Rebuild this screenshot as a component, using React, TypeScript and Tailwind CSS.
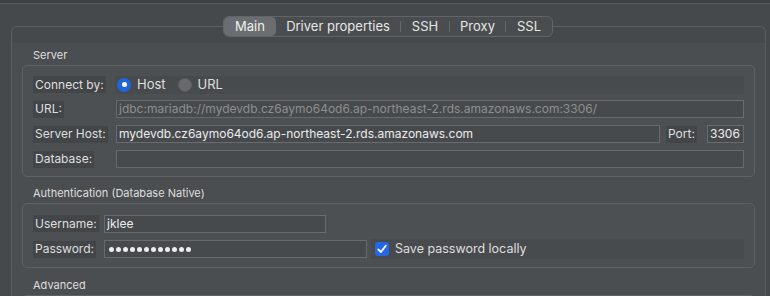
import React from "react"

function Label({ text }: { text: string }) {
  return <span className="inline-flex h-[17px] items-center bg-[#434648] px-[2px] text-[12px] leading-none">{text}</span>
}

function Input({ value, className = "", muted = false }: { value?: string; className?: string; muted?: boolean }) {
  return (
    <div
      className={`flex h-[18px] items-center border border-[#686b6d] bg-[#474a4c] px-[2px] text-[12px] leading-none ${
        muted ? "text-[#8c8f91]" : "text-[#ececec]"
      } ${className}`}
    >
      {value}
    </div>
  )
}

export default function App() {
  const tabs = [
    { name: "Main", w: "w-[52px]", active: true },
    { name: "Driver properties", w: "w-[124px]" },
    { name: "SSH", w: "w-[48px]" },
    { name: "Proxy", w: "w-[55px]" },
    { name: "SSL", w: "w-[46px]" },
  ]

  return (
    <div className="h-[296px] w-[770px] overflow-hidden bg-[#46494b] font-['Inter',sans-serif] text-[13px] text-[#dfdfdf]">
      <div className="h-[4px] border-b border-[#585b5d] bg-[#3e4143]" />

      <div className="pt-[12px]">
        {/* tabs */}
        <div className="relative z-10 ml-[223px] flex h-[21px] w-[330px] items-center rounded-[6px] border border-[#626567] bg-[#4a4d4f]">
          {tabs.map((t, i) => (
            <React.Fragment key={t.name}>
              {i > 1 && <div className="h-[11px] w-px bg-[#66696b]" />}
              <div
                className={`flex h-[19px] items-center justify-center leading-none ${t.w} ${
                  t.active ? "rounded-[5px] bg-[#6b6e70] text-[#f0f0f0]" : "text-[#e6e6e6]"
                }`}
              >
                {t.name}
              </div>
            </React.Fragment>
          ))}
        </div>

        {/* main panel */}
        <div className="-mt-[11px] ml-[11px] w-[755px] rounded-t-[6px] border border-b-0 border-[#5a5d5f] pt-[16px]">
          <div className="bg-[#4b4e50] px-[10px] pt-[4px]">
            <div className="ml-[11px] h-[16px] text-[11px] leading-[16px]">Server</div>

            <div className="mt-[2px] rounded-[5px] border border-[#5f6264] bg-[#4d5052] px-[10px] pb-[8px] pt-[10px]">
              <div className="flex flex-col gap-[7px]">
                <div className="flex h-[17px] items-center">
                  <div className="w-[82px] shrink-0">
                    <Label text="Connect by:" />
                  </div>
                  <div className="flex h-[18px] flex-1 items-center bg-[#484b4d] pl-[2px]">
                    <div className="flex h-[14px] w-[14px] items-center justify-center rounded-full bg-[#1f66de]">
                      <div className="h-[5px] w-[5px] rounded-full bg-white" />
                    </div>
                    <span className="ml-[6px] leading-none">Host</span>
                    <div className="ml-[12px] h-[14px] w-[14px] rounded-full border border-[#5c5f61] bg-[#67696b]" />
                    <span className="ml-[6px] leading-none">URL</span>
                  </div>
                </div>

                <div className="flex h-[18px] items-center">
                  <div className="w-[83px] shrink-0">
                    <Label text="URL:" />
                  </div>
                  <Input
                    muted
                    className="flex-1"
                    value="jdbc:mariadb://mydevdb.cz6aymo64od6.ap-northeast-2.rds.amazonaws.com:3306/"
                  />
                </div>

                <div className="flex h-[18px] items-center">
                  <div className="w-[83px] shrink-0">
                    <Label text="Server Host:" />
                  </div>
                  <Input className="w-[544px]" value="mydevdb.cz6aymo64od6.ap-northeast-2.rds.amazonaws.com" />
                  <div className="ml-[6px] w-[41px]">
                    <Label text="Port:" />
                  </div>
                  <Input className="w-[37px]" value="3306" />
                </div>

                <div className="flex h-[18px] items-center">
                  <div className="w-[83px] shrink-0">
                    <Label text="Database:" />
                  </div>
                  <Input className="flex-1" />
                </div>
              </div>
            </div>

            <div className="ml-[11px] mt-[8px] h-[16px] text-[11px] leading-[16px]">Authentication (Database Native)</div>

            <div className="mt-[2px] rounded-[5px] border border-[#5f6264] bg-[#4d5052] px-[10px] pb-[9px] pt-[11px]">
              <div className="flex flex-col gap-[8px]">
                <div className="flex h-[17px] items-center">
                  <div className="w-[71px] shrink-0">
                    <Label text="Username:" />
                  </div>
                  <Input className="w-[222px]" value="jklee" />
                </div>

                <div className="flex h-[18px] items-center">
                  <div className="w-[71px] shrink-0">
                    <Label text="Password:" />
                  </div>
                  <div className="flex h-[18px] w-[263px] items-center gap-[2px] border border-[#686b6d] bg-[#474a4c] pl-[4px]">
                    {Array.from({ length: 12 }).map((_, i) => (
                      <div key={i} className="h-[5px] w-[5px] rounded-full bg-[#ececec]" />
                    ))}
                  </div>
                  <div className="ml-[4px] flex h-[20px] flex-1 items-center bg-[#484b4d] pl-[4px]">
                    <div className="flex h-[14px] w-[14px] items-center justify-center rounded-[3px] bg-[#2568e3]">
                      <svg viewBox="0 0 14 14" className="h-[14px] w-[14px]">
                        <path d="M3.3 7.4 L5.9 10 L10.8 3.8" fill="none" stroke="white" strokeWidth="1.8" strokeLinecap="round" strokeLinejoin="round" />
                      </svg>
                    </div>
                    <span className="ml-[6px] text-[12.5px] leading-none">Save password locally</span>
                  </div>
                </div>
              </div>
            </div>

            <div className="ml-[11px] mt-[9px] h-[16px] text-[11px] leading-[16px]">Advanced</div>
            <div className="mt-[2px] h-[10px] rounded-t-[5px] border border-b-0 border-[#5f6264] bg-[#4d5052]" />
          </div>
        </div>
      </div>
    </div>
  )
}
